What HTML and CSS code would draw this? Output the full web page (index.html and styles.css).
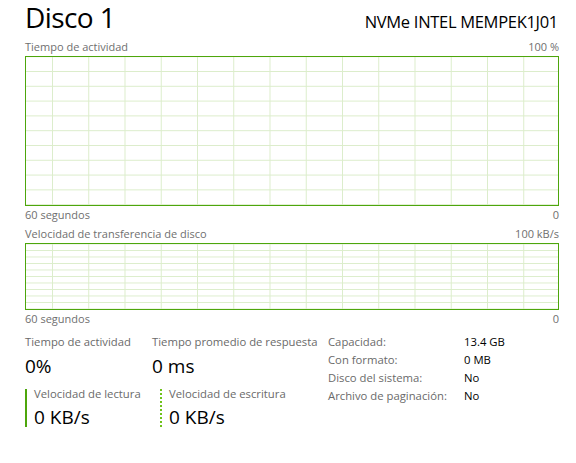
FILE: index.html
```html
<!DOCTYPE html>
<html lang="es">
<head>
<meta charset="utf-8">
<link rel="stylesheet" href="styles.css">
</head>
<body>
<div class="panel">
  <div class="header">
    <div class="title">Disco 1</div>
    <div class="model">NVMe INTEL MEMPEK1J01</div>
  </div>

  <div class="axis top"><span>Tiempo de actividad</span><span>100 %</span></div>
  <div class="chart chart-big"></div>
  <div class="axis"><span>60 segundos</span><span>0</span></div>

  <div class="axis top2"><span>Velocidad de transferencia de disco</span><span>100 kB/s</span></div>
  <div class="chart chart-small"></div>
  <div class="axis"><span>60 segundos</span><span>0</span></div>

  <div class="stats">
    <div class="left">
      <div class="row1">
        <div class="stat s-act">
          <div class="label">Tiempo de actividad</div>
          <div class="value">0%</div>
        </div>
        <div class="stat">
          <div class="label">Tiempo promedio de respuesta</div>
          <div class="value">0 ms</div>
        </div>
      </div>
      <div class="row2">
        <div class="stat rw read">
          <div class="label">Velocidad de lectura</div>
          <div class="value">0 KB/s</div>
        </div>
        <div class="stat rw write">
          <div class="label">Velocidad de escritura</div>
          <div class="value">0 KB/s</div>
        </div>
      </div>
    </div>
    <div class="props">
      <div class="k">Capacidad:</div><div class="v">13.4 GB</div>
      <div class="k">Con formato:</div><div class="v">0 MB</div>
      <div class="k">Disco del sistema:</div><div class="v">No</div>
      <div class="k">Archivo de paginación:</div><div class="v">No</div>
    </div>
  </div>
</div>
</body>
</html>
```

FILE: styles.css
```css
html, body {
  margin: 0;
  padding: 0;
  background: #ffffff;
}

body {
  font-family: "Open Sans", "Noto Sans", sans-serif;
  color: #000;
}

.panel {
  width: 534px;
  padding: 0 0 0 25px;
}

.header {
  display: flex;
  justify-content: space-between;
  align-items: baseline;
  height: 38px;
}

.title {
  font-size: 28px;
  line-height: 34px;
  letter-spacing: -0.6px;
}

.model {
  font-size: 16.5px;
  line-height: 20px;
  margin-right: 1px;
  letter-spacing: -0.3px;
}

.axis {
  display: flex;
  justify-content: space-between;
  font-size: 11px;
  line-height: 18px;
  color: #6f6f6f;
  height: 18px;
}

.axis.top2 { margin-top: 1px; }

.chart {
  box-sizing: border-box;
  border: 1px solid #4da60c;
  background-color: #fff;
}

.chart-big {
  height: 150px;
  background-image:
    linear-gradient(to right, #dcedcb 1px, transparent 1px),
    linear-gradient(to bottom, #dcedcb 1px, transparent 1px);
  background-size: 36.25px 100%, 100% 14.8px;
  background-position: 26px 0, 0 14px;
}

.chart-small {
  height: 67px;
  background-image:
    linear-gradient(to right, #dcedcb 1px, transparent 1px),
    linear-gradient(to bottom, #dcedcb 1px, transparent 1px);
  background-size: 36.25px 100%, 100% 6.5px;
  background-position: 26px 0, 0 6px;
}

.stats {
  display: flex;
  align-items: flex-start;
  margin-top: 6px;
}

.left {
  width: 303px;
}

.row1 {
  display: flex;
}

.stat .label {
  font-size: 11.3px;
  line-height: 16px;
  color: #6a6a6a;
  white-space: nowrap;
}

.stat .value {
  font-size: 19px;
  line-height: 26px;
  margin-top: 3px;
}

.s-act {
  width: 127px;
}

.row2 {
  display: flex;
  margin-top: 10px;
}

.rw {
  padding-left: 7px;
  height: 38px;
  box-sizing: border-box;
}

.read {
  border-left: 2px solid #4da60c;
  width: 135px;
}

.write {
  border-left: 2px dotted #6fc21a;
}

.rw .label {
  line-height: 14px;
  margin-top: -2px;
}

.rw .value {
  line-height: 26px;
  margin-top: 3px;
}

.props {
  display: grid;
  grid-template-columns: 136px auto;
  font-size: 11.3px;
  line-height: 18px;
  margin-top: -1px;
}

.props .k {
  color: #6a6a6a;
}

.props .v {
  color: #000;
}
```
